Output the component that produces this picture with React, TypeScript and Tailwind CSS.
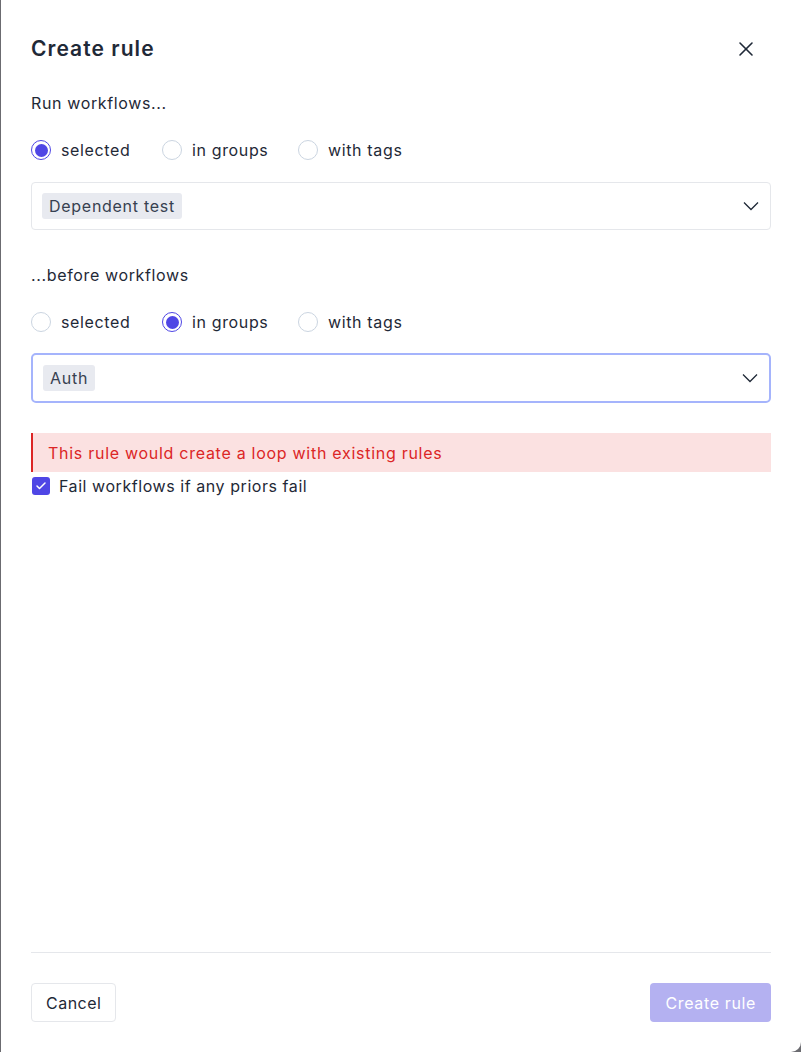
import React from "react";
import { X, Check } from "lucide-react";

const Radio: React.FC<{ label: string; checked?: boolean }> = ({ label, checked }) => (
  <label className="flex items-center gap-[10px] h-6">
    <span
      className={`w-5 h-5 rounded-full flex items-center justify-center ${
        checked ? "border-[1.5px] border-[#4f46e5]" : "border border-[#cbd5e1]"
      }`}
    >
      {checked && <span className="w-[13px] h-[13px] rounded-full bg-[#4f46e5]" />}
    </span>
    <span className="text-base text-[#1f2937]">{label}</span>
  </label>
);

const RadioRow: React.FC<{ value: number }> = ({ value }) => (
  <div className="flex items-center">
    <div className="w-[131px]">
      <Radio label="selected" checked={value === 0} />
    </div>
    <div className="w-[136px]">
      <Radio label="in groups" checked={value === 1} />
    </div>
    <Radio label="with tags" checked={value === 2} />
  </div>
);

const Chevron = () => (
  <svg width="16" height="10" viewBox="0 0 16 10" fill="none" className="text-[#1f2937]">
    <path d="M1 1.5 L8 8.5 L15 1.5" stroke="currentColor" strokeWidth="1.3" />
  </svg>
);

const SelectBox: React.FC<{ chip: string; focused?: boolean }> = ({ chip, focused }) => (
  <div
    className={`flex items-center justify-between pr-[11px] ${
      focused
        ? "h-[50px] border-2 border-[#a5b4fc] rounded-[5px] pl-[10px]"
        : "h-12 border border-[#e5e7eb] rounded pl-[10px]"
    }`}
  >
    <span className="bg-[#e8eaf0] rounded-[3px] px-[7px] h-[26px] flex items-center text-base text-[#374151] tracking-[0.045em]">
      {chip}
    </span>
    <Chevron />
  </div>
);

export default function App() {
  return (
    <div
      className="w-[801px] h-[1052px] bg-[#6b6b70] overflow-hidden tracking-[0.04em]"
      style={{ fontFamily: "Inter, 'Noto Sans', sans-serif" }}
    >
      <div className="ml-[1px] h-full bg-white rounded-br-[10px] flex flex-col px-[30px] pb-[30px]">
        <div className="flex items-center justify-between h-7 mt-[35px]">
          <h1 className="text-[21px] font-semibold text-[#1f2937] tracking-[0.05em]">Create rule</h1>
          <X size={24} strokeWidth={1.6} className="text-[#1f2937] mr-[13px]" />
        </div>

        <p className="mt-[28px] h-6 text-base text-[#1f2937] leading-6">Run workflows...</p>
        <div className="mt-[23px]">
          <RadioRow value={0} />
        </div>
        <div className="mt-[20px]">
          <SelectBox chip="Dependent test" />
        </div>

        <p className="mt-[33px] h-6 text-base text-[#1f2937] leading-6">...before workflows</p>
        <div className="mt-[23px]">
          <RadioRow value={1} />
        </div>
        <div className="mt-[19px]">
          <SelectBox chip="Auth" focused />
        </div>

        <div className="mt-[30px] h-[39px] bg-[#fbe1e1] border-l-2 border-[#dc2626] flex items-center pl-[15px] text-base text-[#dc2626] tracking-[0.045em]">
          This rule would create a loop with existing rules
        </div>
        <label className="mt-[4px] h-5 flex items-center gap-[9px]">
          <span className="w-[18px] h-[18px] ml-[1px] rounded-[3px] bg-[#4f46e5] flex items-center justify-center">
            <Check size={12} strokeWidth={3} className="text-white" />
          </span>
          <span className="text-base text-[#1f2937] tracking-[0.035em]">Fail workflows if any priors fail</span>
        </label>

        <div className="flex-1" />

        <div className="border-t border-[#e5e7eb]" />
        <div className="mt-[30px] flex items-center justify-between">
          <button className="h-[39px] px-[14px] border border-[#e5e7eb] rounded text-base text-[#1f2937] bg-white tracking-[0.03em]">
            Cancel
          </button>
          <button className="h-[39px] px-[15px] rounded bg-[#b4b1f1] text-base text-white">
            Create rule
          </button>
        </div>
      </div>
    </div>
  );
}
